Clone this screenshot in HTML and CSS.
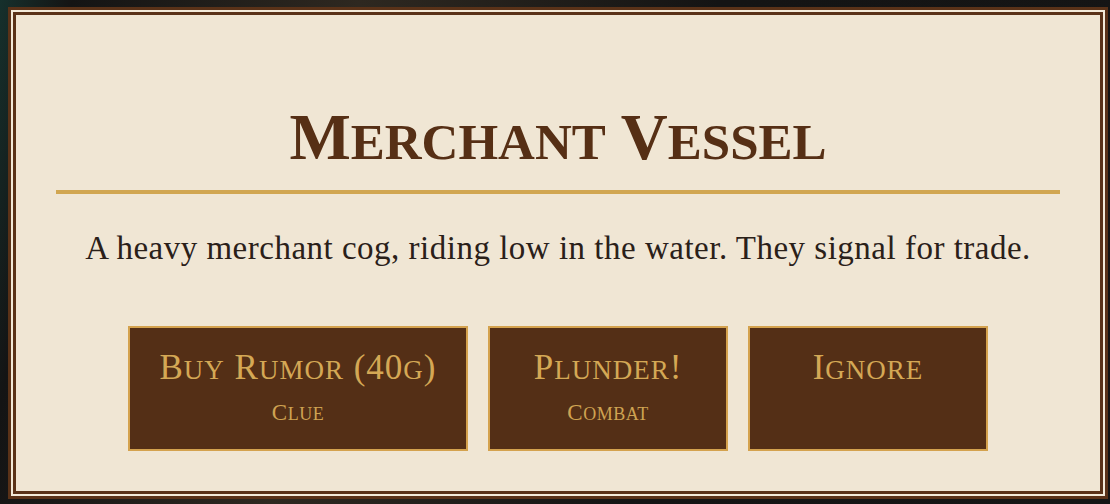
FILE: index.html
```html
<!DOCTYPE html>
<html lang="en">
<head>
<meta charset="utf-8">
<title>Merchant Vessel</title>
<link rel="stylesheet" href="styles.css">
</head>
<body>
<div class="dialog">
  <div class="panel">
    <h1 class="title"><span class="cap">M</span><span class="sc">erchant</span> <span class="cap">V</span><span class="sc">essel</span></h1>
    <p class="desc">A heavy merchant cog, riding low in the water. They signal for trade.</p>
    <div class="choices">
      <button class="choice wide">
        <span class="label"><span class="cap">B</span><span class="sc">uy</span> <span class="cap">R</span><span class="sc">umor</span> <span class="cap">(40</span><span class="sc">g</span><span class="cap">)</span></span>
        <span class="tag"><span class="tcap">C</span><span class="tsc">lue</span></span>
      </button>
      <button class="choice">
        <span class="label"><span class="cap">P</span><span class="sc">lunder</span><span class="cap">!</span></span>
        <span class="tag"><span class="tcap">C</span><span class="tsc">ombat</span></span>
      </button>
      <button class="choice">
        <span class="label"><span class="cap">I</span><span class="sc">gnore</span></span>
      </button>
    </div>
  </div>
</div>
</body>
</html>
```
FILE: styles.css
```css
html, body {
  margin: 0;
  padding: 0;
}
body {
  width: 1110px;
  height: 504px;
  overflow: hidden;
  background: linear-gradient(100deg, #16302c 0%, #141414 6%, #2e2820 30%, #141414 60%, #151515 100%);
  padding: 7px 2px 5px 8px;
  box-sizing: border-box;
}
.dialog {
  width: 1100px;
  height: 492px;
  box-sizing: border-box;
  border: 3px solid #5a3218;
  padding: 2px;
  background: #f3ead9;
}
.panel {
  height: 100%;
  box-sizing: border-box;
  border: 3px solid #5a3218;
  background: #f0e6d4;
  padding: 0 40px 40px;
  display: flex;
  flex-direction: column;
}
.title {
  margin: 90px 0 0;
  padding: 0 0 15px;
  border-bottom: 4px solid #d1a651;
  text-align: center;
  font-family: "Liberation Serif", "DejaVu Serif", serif;
  font-weight: bold;
  font-size: 65px;
  line-height: 65px;
  color: #562f15;
}
.title .sc {
  font-size: 51px;
  text-transform: uppercase;
}
.desc {
  margin: 30px 0 0;
  text-align: center;
  font-family: "Liberation Serif", "DejaVu Serif", serif;
  font-size: 33px;
  line-height: 48px;
  letter-spacing: 0.5px;
  color: #2a2019;
}
.choices {
  margin-top: 54px;
  display: flex;
  justify-content: center;
  gap: 20px;
}
.choice {
  width: 240px;
  height: 125px;
  box-sizing: border-box;
  border: 2px solid #d4a24e;
  background: #542f16;
  color: #d4a855;
  padding: 19px 0 0;
  margin: 0;
  display: flex;
  flex-direction: column;
  align-items: center;
  justify-content: flex-start;
  font-family: "Liberation Serif", "DejaVu Serif", serif;
  cursor: pointer;
}
.choice.wide {
  width: 340px;
}
.label {
  display: block;
  font-size: 35px;
  line-height: 42px;
  letter-spacing: 1px;
  white-space: nowrap;
}
.label .sc {
  font-size: 27px;
  text-transform: uppercase;
}
.tag {
  display: block;
  margin-top: 8px;
  font-size: 23px;
  line-height: 28px;
  letter-spacing: 0.5px;
  color: #cfa352;
}
.tag .tsc {
  font-size: 18px;
  text-transform: uppercase;
}
```
